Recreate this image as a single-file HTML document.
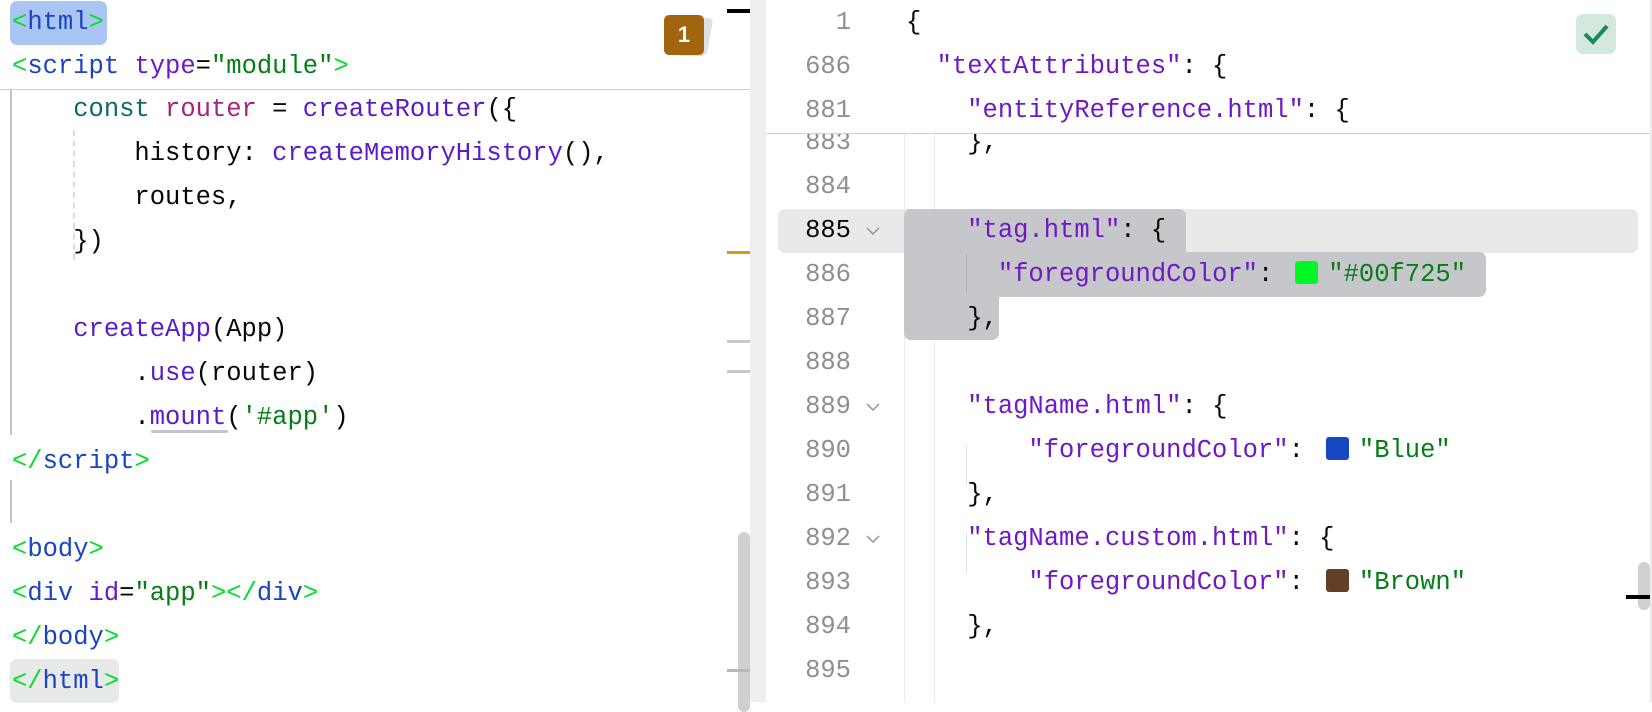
<!DOCTYPE html>
<html><head><meta charset="utf-8"><style>
body{margin:0;width:1652px;height:702px;overflow:hidden;background:#fff;position:relative;font-family:"Liberation Mono",monospace;font-size:25.5px}
.l{position:absolute;height:44px;line-height:44px;white-space:pre;color:#080808}
.a{position:absolute}
.g{color:#00e02a}.t{color:#1a44c2}.at{color:#6f18c4}.s{color:#067d17}.k{color:#0e6a6a}.v{color:#a8217f}.f{color:#5b1bc6}
.n{position:absolute;left:780px;width:71px;text-align:right;color:#8c8f94;height:44px;line-height:44px}
.sw{display:inline-block;width:23px;height:23px;border-radius:3px;vertical-align:-3px;margin:0 10px 0 22px}
.ch{position:absolute;left:866px;width:14px;height:14px}
</style></head><body>
<div class="a" style="left:10px;top:1px;width:97px;height:44px;background:#a9c5f3;border-radius:7px"></div>
<div class="a" style="left:10px;top:659px;width:109px;height:44px;background:#e8e9e9;border-radius:7px"></div>
<div class="l" style="left:12px;top:1px"><span class="g">&lt;</span><span class="t">html</span><span class="g">&gt;</span></div>
<div class="l" style="left:12px;top:45px"><span class="g">&lt;</span><span class="t">script </span><span class="at">type</span>=<span class="s">"module"</span><span class="g">&gt;</span></div>
<div class="a" style="left:0;top:89px;width:753px;height:1px;background:#cfcfcf"></div>
<div class="a" style="left:10px;top:90px;width:2px;height:345px;background:#c4c4c4"></div>
<div class="a" style="left:10px;top:480px;width:2px;height:43px;background:#c4c4c4"></div>
<div class="a" style="left:73px;top:130px;width:0;height:130px;border-left:2px dashed #dcdcdc"></div>
<div class="l" style="left:12px;top:88px">    <span class="k">const</span> <span class="v">router</span> = <span class="f">createRouter</span>({</div>
<div class="l" style="left:12px;top:132px">        history: <span class="f">createMemoryHistory</span>(),</div>
<div class="l" style="left:12px;top:176px">        routes,</div>
<div class="l" style="left:12px;top:220px">    })</div>
<div class="l" style="left:12px;top:308px">    <span class="f">createApp</span>(App)</div>
<div class="l" style="left:12px;top:352px">        .<span class="f">use</span>(router)</div>
<div class="l" style="left:12px;top:396px">        .<span class="f">mount</span>(<span class="s">'#app'</span>)</div>
<div class="a" style="left:151px;top:430px;width:77px;height:3px;background:#c4c4cc;border-radius:2px"></div>
<div class="l" style="left:12px;top:440px"><span class="g">&lt;/</span><span class="t">script</span><span class="g">&gt;</span></div>
<div class="l" style="left:12px;top:528px"><span class="g">&lt;</span><span class="t">body</span><span class="g">&gt;</span></div>
<div class="l" style="left:12px;top:572px"><span class="g">&lt;</span><span class="t">div </span><span class="at">id</span>=<span class="s">"app"</span><span class="g">&gt;&lt;/</span><span class="t">div</span><span class="g">&gt;</span></div>
<div class="l" style="left:12px;top:616px"><span class="g">&lt;/</span><span class="t">body</span><span class="g">&gt;</span></div>
<div class="l" style="left:12px;top:660px"><span class="g">&lt;/</span><span class="t">html</span><span class="g">&gt;</span></div>
<div class="a" style="left:680px;top:18px;width:30px;height:38px;background:#e0e0e0;border-radius:5px;transform:skewX(-10deg)"></div>
<div class="a" style="left:664px;top:15px;width:40px;height:40px;background:#a0650e;border-radius:5px;color:#fff;font-family:'Liberation Sans',sans-serif;font-weight:bold;font-size:22px;text-align:center;line-height:40px">1</div>
<div class="a" style="left:727px;top:9px;width:23px;height:4px;background:#000"></div>
<div class="a" style="left:727px;top:251px;width:23px;height:3px;background:#e8950a"></div>
<div class="a" style="left:727px;top:340px;width:23px;height:3px;background:#c7c8cc"></div>
<div class="a" style="left:727px;top:370px;width:23px;height:3px;background:#c7c8cc"></div>
<div class="a" style="left:738px;top:532px;width:12px;height:180px;background:#d0d0d0;border-radius:6px"></div>
<div class="a" style="left:727px;top:669px;width:23px;height:3px;background:#b8b8bc"></div>
<div class="a" style="left:750px;top:0;width:16px;height:702px;background:#eeeff1"></div>
<div class="a" style="left:904px;top:134px;width:1px;height:568px;background:#ebebeb"></div>
<div class="a" style="left:934px;top:134px;width:1px;height:568px;background:#ebebeb"></div>
<div class="a" style="left:778px;top:209px;width:860px;height:44px;background:#e8e9e9;border-radius:7px"></div>
<div class="a" style="left:904px;top:209px;width:282px;height:44px;background:#c6c7ca;border-radius:7px 7px 0 0"></div>
<div class="a" style="left:904px;top:252px;width:582px;height:45px;background:#c6c7ca;border-radius:0 7px 7px 0"></div>
<div class="a" style="left:904px;top:296px;width:95px;height:44px;background:#c6c7ca;border-radius:0 0 7px 7px"></div>
<div class="a" style="left:966px;top:253px;width:1px;height:40px;background:#b4b5b8"></div>
<div class="a" style="left:966px;top:445px;width:1px;height:40px;background:#e0e0e0"></div>
<div class="a" style="left:966px;top:533px;width:1px;height:40px;background:#e0e0e0"></div>
<div class="n" style="top:121px">883</div><div class="l" style="left:906px;top:121px">    },</div>
<div class="n" style="top:165px">884</div>
<div class="n" style="top:209px;color:#080808">885</div><div class="l" style="left:906px;top:209px">    <span class="at">"tag.html"</span>: {</div>
<div class="n" style="top:253px">886</div><div class="l" style="left:906px;top:253px">      <span class="at">"foregroundColor"</span>:<span class="sw" style="background:#00f725"></span><span class="s">"#00f725"</span></div>
<div class="n" style="top:297px">887</div><div class="l" style="left:906px;top:297px">    },</div>
<div class="n" style="top:341px">888</div>
<div class="n" style="top:385px">889</div><div class="l" style="left:906px;top:385px">    <span class="at">"tagName.html"</span>: {</div>
<div class="n" style="top:429px">890</div><div class="l" style="left:906px;top:429px">        <span class="at">"foregroundColor"</span>:<span class="sw" style="background:#1847c2"></span><span class="s">"Blue"</span></div>
<div class="n" style="top:473px">891</div><div class="l" style="left:906px;top:473px">    },</div>
<div class="n" style="top:517px">892</div><div class="l" style="left:906px;top:517px">    <span class="at">"tagName.custom.html"</span>: {</div>
<div class="n" style="top:561px">893</div><div class="l" style="left:906px;top:561px">        <span class="at">"foregroundColor"</span>:<span class="sw" style="background:#633f26"></span><span class="s">"Brown"</span></div>
<div class="n" style="top:605px">894</div><div class="l" style="left:906px;top:605px">    },</div>
<div class="n" style="top:649px">895</div>
<svg class="ch" style="top:224px" viewBox="0 0 14 14"><path d="M1 4 L7 10 L13 4" fill="none" stroke="#8c8f94" stroke-width="1.4"/></svg>
<svg class="ch" style="top:400px" viewBox="0 0 14 14"><path d="M1 4 L7 10 L13 4" fill="none" stroke="#8c8f94" stroke-width="1.4"/></svg>
<svg class="ch" style="top:532px" viewBox="0 0 14 14"><path d="M1 4 L7 10 L13 4" fill="none" stroke="#8c8f94" stroke-width="1.4"/></svg>
<div class="a" style="left:766px;top:0;width:884px;height:133px;background:#fff"></div>
<div class="a" style="left:766px;top:133px;width:884px;height:1px;background:#cfcfcf"></div>
<div class="n" style="top:1px">1</div><div class="l" style="left:906px;top:1px">{</div>
<div class="n" style="top:45px">686</div><div class="l" style="left:906px;top:45px">  <span class="at">"textAttributes"</span>: {</div>
<div class="n" style="top:89px">881</div><div class="l" style="left:906px;top:89px">    <span class="at">"entityReference.html"</span>: {</div>
<div class="a" style="left:1576px;top:14px;width:40px;height:40px;background:#d3e9dc;border-radius:7px"></div>
<svg class="a" style="left:1576px;top:14px" width="40" height="40" viewBox="0 0 40 40"><path d="M9 20 L17 28 L31 12" fill="none" stroke="#178a5c" stroke-width="4"/></svg>
<div class="a" style="left:1650px;top:0;width:2px;height:702px;background:#ececec"></div>
<div class="a" style="left:1638px;top:562px;width:12px;height:48px;background:#d0d0d0;border-radius:6px"></div>
<div class="a" style="left:1626px;top:595px;width:24px;height:4px;background:#000"></div>
</body></html>
